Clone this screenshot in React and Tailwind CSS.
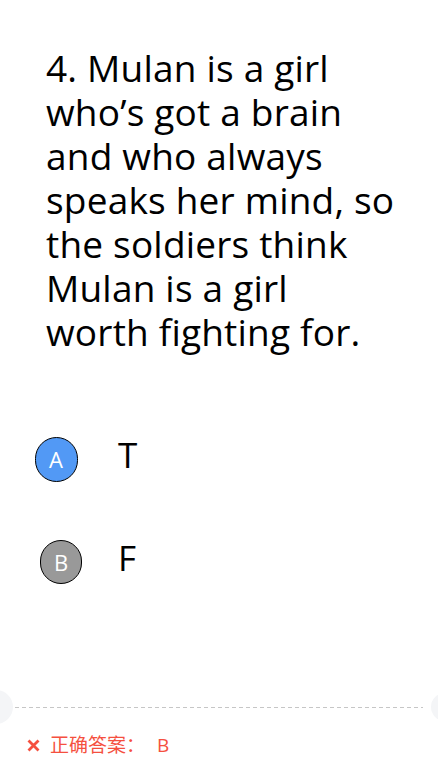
import React from 'react';

const lines = [
  '4. Mulan is a girl',
  'who’s got a brain',
  'and who always',
  'speaks her mind, so',
  'the soldiers think',
  'Mulan is a girl',
  'worth fighting for.',
];

const options = [
  { key: 'A', text: 'T', active: true },
  { key: 'B', text: 'F', active: false },
];

const App = () => {
  return (
    <div className="relative w-[438px] h-[758px] overflow-hidden bg-white font-['Open_Sans','Noto_Sans_CJK_SC',sans-serif] text-black">
      {/* Question */}
      <div className="pl-[46px] pt-[46px]">
        <p className="text-[37px] leading-[44px] tracking-[0.2px] whitespace-nowrap">
          {lines.map((l, i) => (
            <span key={i} className="block">{l}</span>
          ))}
        </p>
      </div>

      {/* Options */}
      <div className="mt-[84px] flex flex-col gap-[61px]">
        {options.map((opt) => (
          <div key={opt.key} className="flex items-center h-[42px]">
            <div className={opt.active ? 'w-[42px] flex justify-center ml-[35px]' : 'w-[42px] flex justify-center ml-[40px]'}>
              <div
                className={
                  opt.active
                    ? 'w-[43px] h-[45px] shrink-0 rounded-full border border-black bg-[#5299f5] text-white flex items-center justify-center text-[22px] font-medium'
                    : 'w-[42px] h-[44px] shrink-0 rounded-full border border-black bg-[#999999] text-white flex items-center justify-center text-[22px] font-medium'
                }
              >
                {opt.key}
              </div>
            </div>
            <span className={opt.active ? 'ml-[41px] mb-[9px] text-[35px] leading-none' : 'ml-[36px] mb-[9px] text-[35px] leading-none'}>
              {opt.text}
            </span>
          </div>
        ))}
      </div>

      {/* Answer footer */}
      <div className="absolute left-0 right-0 top-[690px]">
        <div className="relative h-[34px] flex items-center">
          <div className="absolute left-[-21px] top-0 w-[34px] h-[34px] rounded-full bg-[#f4f5f7]" />
          <div className="absolute right-[-24px] top-[3px] w-[31px] h-[28px] rounded-full bg-[#f4f5f7]" />
          <div className="mx-[15px] w-full h-px bg-[repeating-linear-gradient(90deg,#c6c6c6_0_4px,transparent_4px_7px)]" />
        </div>
        <div className="flex items-center pl-[27px] pt-[8px] text-[19px] leading-[26px] text-[#f5503f]">
          <svg width="13" height="13" viewBox="0 0 13 13" className="mr-[10px]">
            <path d="M1.5 1.5 L11.5 11.5 M11.5 1.5 L1.5 11.5" stroke="#f5503f" strokeWidth="2.8" />
          </svg>
          <span>正确答案：</span>
          <span className="ml-[12px]">B</span>
        </div>
      </div>
    </div>
  );
};

export default App;
